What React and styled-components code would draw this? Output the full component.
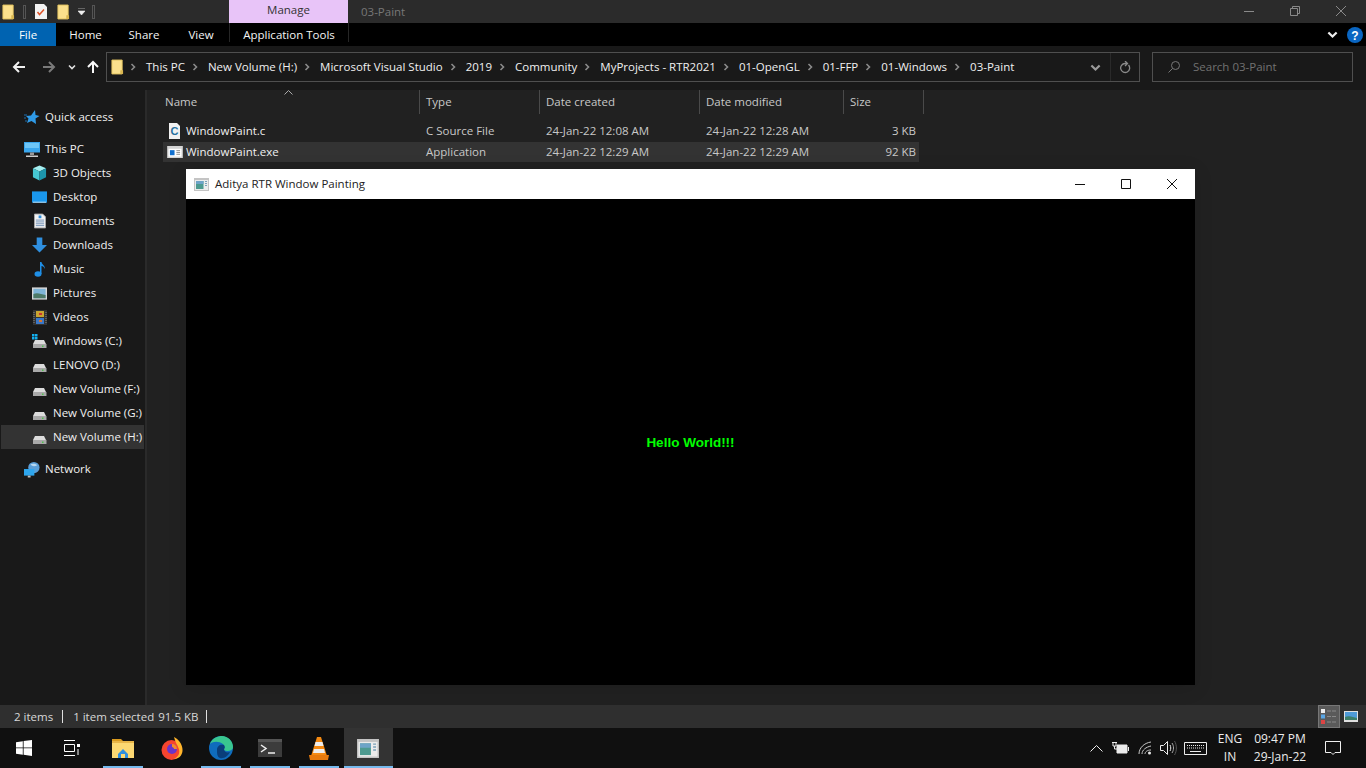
import React from 'react';
import styled, { createGlobalStyle } from 'styled-components';

const GlobalStyle = createGlobalStyle`
  html, body {
    margin: 0;
    padding: 0;
    background: #191919;
    overflow: hidden;
  }
  body {
    font-family: "Open Sans", "Noto Sans", sans-serif;
    font-size: 11.5px;
  }
  * { box-sizing: border-box; }
`;

const Page = styled.div`
  width: 1366px;
  height: 768px;
  display: flex;
  flex-direction: column;
  color: #f0f0f0;
  overflow: hidden;
`;

/* title bar */
const TitleBar = styled.div`
  height: 23px;
  background: #2b2b2b;
  display: flex;
  align-items: stretch;
`;

const QuickTools = styled.div`
  width: 229px;
  display: flex;
  align-items: center;
  padding-left: 2px;
`;

const ToolIcon = styled.span`
  display: flex;
  margin-right: ${p => p.$gap}px;
`;

const ToolSep = styled.span`
  width: 3px;
  height: 14px;
  border: 1px solid #555;
  margin-right: ${p => p.$gap}px;
`;

const ManageTab = styled.div`
  width: 119px;
  background: #e8c4f8;
  color: #333;
  display: flex;
  align-items: center;
  justify-content: center;
  padding-bottom: 5px;
`;

const WindowName = styled.div`
  flex: 1;
  padding-left: 13px;
  display: flex;
  align-items: center;
  color: #777;
`;

const WindowControls = styled.div`
  display: flex;
  align-items: center;
  padding-right: 2px;
`;

const ControlSlot = styled.span`
  width: 46px;
  display: flex;
  justify-content: center;
  padding-bottom: 2px;
`;

/* ribbon tabs */
const Ribbon = styled.div`
  height: 23px;
  background: #000;
  display: flex;
  align-items: stretch;
`;

const FileTab = styled.div`
  width: 56px;
  background: #0063b1;
  color: #fff;
  display: flex;
  align-items: center;
  justify-content: center;
`;

const RibbonTab = styled.div`
  width: ${p => p.$w}px;
  display: flex;
  align-items: center;
  justify-content: center;
  color: #f4f4f4;
`;

const ContextTab = styled(RibbonTab)`
  border-left: 1px solid #262626;
  border-right: 1px solid #262626;
  margin-bottom: 4px;
  padding-top: 4px;
`;

const RibbonEnd = styled.div`
  margin-left: auto;
  display: flex;
  align-items: center;
  gap: 9px;
  padding-right: 3px;
`;

/* address row */
const AddressRow = styled.div`
  height: 44px;
  background: #191919;
  display: flex;
  align-items: center;
  padding-bottom: 2px;
`;

const NavButtons = styled.div`
  width: 106px;
  display: flex;
  align-items: center;
`;

const NavSlot = styled.span`
  width: ${p => p.$w}px;
  display: flex;
  justify-content: center;
`;

const AddressBox = styled.div`
  width: 1034px;
  height: 30px;
  border: 1px solid #4f4f4f;
  display: flex;
  align-items: center;
  padding-left: 4px;
`;

const Crumbs = styled.div`
  flex: 1;
  display: flex;
  align-items: center;
  padding-left: 5px;
  white-space: nowrap;
`;

const Crumb = styled.span`
  color: #f0f0f0;
  margin-right: 6px;
  padding-bottom: 2px;
`;

const CrumbChevron = styled.span`
  display: flex;
  margin-right: 9px;
`;

const AddressDrop = styled.span`
  width: 29px;
  height: 100%;
  display: flex;
  align-items: center;
  justify-content: flex-start;
  padding-left: 9px;
`;

const Refresh = styled.span`
  width: 29px;
  height: 100%;
  border-left: 1px solid #2a2a2a;
  display: flex;
  align-items: center;
  justify-content: center;
`;

const SearchBox = styled.div`
  width: 201px;
  height: 30px;
  margin-left: 12px;
  border: 1px solid #4f4f4f;
  display: flex;
  align-items: center;
  padding-left: 15px;
  gap: 13px;
  color: #717171;
`;

const SearchText = styled.span`
  padding-bottom: 2px;
`;

/* main */
const Main = styled.div`
  position: relative;
  height: 615px;
  display: flex;
  background: #212121;
`;

const Sidebar = styled.div`
  width: 147px;
  padding-top: 15px;
  background: #191919;
  border-right: 2px solid #2a2a2a;
  display: flex;
  flex-direction: column;
`;

const NavItem = styled.div`
  height: 24px;
  margin: ${p => (p.$top ? '8px' : '0')} 1px 0 1px;
  padding-left: ${p => (p.$child ? 31 : 23)}px;
  display: flex;
  align-items: center;
  gap: ${p => (p.$child ? 6 : 5)}px;
  background: ${p => (p.$selected ? '#333' : 'transparent')};
  white-space: nowrap;
`;

const NavLabel = styled.span`
  padding-bottom: 2px;
`;

const NavIconBox = styled.span`
  width: ${p => (p.$child ? 15 : 16)}px;
  height: 16px;
  display: flex;
  align-items: center;
  justify-content: center;
`;

const Files = styled.div`
  flex: 1;
  padding-left: 13px;
  display: flex;
  flex-direction: column;
`;

const HeaderRow = styled.div`
  height: 24px;
  display: grid;
  grid-template-columns: 260px 120px 160px 144px 80px;
  margin-bottom: 7px;
`;

const HeaderCell = styled.div`
  position: relative;
  padding-left: ${p => p.$pad}px;
  padding-bottom: 2px;
  border-right: 1px solid #4a4a4a;
  display: flex;
  align-items: center;
  color: #c8c8c8;
`;

const SortCaret = styled.span`
  position: absolute;
  left: 124px;
  top: 0;
  display: flex;
`;

const FileRow = styled.div`
  height: 20px;
  width: 756px;
  margin-left: 3px;
  margin-bottom: 1px;
  padding-bottom: 1px;
  display: grid;
  grid-template-columns: 257px 120px 160px 144px 72px;
  align-items: center;
  background: ${p => (p.$selected ? '#333' : 'transparent')};
`;

const NameCell = styled.div`
  display: flex;
  align-items: center;
  gap: 3px;
  padding-left: 3px;
  color: #f0f0f0;
`;

const FileIconBox = styled.span`
  width: 17px;
  display: flex;
  justify-content: center;
`;

const InfoCell = styled.div`
  padding-left: 6px;
  color: #c8c8c8;
  text-align: ${p => (p.$right ? 'right' : 'left')};
`;

/* floating app window */
const AppWindow = styled.div`
  position: absolute;
  left: 186px;
  top: 79px;
  width: 1009px;
  height: 516px;
  display: flex;
  flex-direction: column;
  box-shadow: 0 3px 18px rgba(0, 0, 0, 0.12);
`;

const AppTitle = styled.div`
  height: 30px;
  background: #fff;
  color: #222;
  display: flex;
  align-items: center;
  padding-left: 8px;
  gap: 6px;
  font-size: 11.5px;
`;

const AppTitleText = styled.span`
  padding-bottom: 2px;
`;

const AppControls = styled.div`
  margin-left: auto;
  display: flex;
`;

const AppControl = styled.span`
  width: 46px;
  display: flex;
  justify-content: center;
`;

const AppCanvas = styled.div`
  flex: 1;
  background: #000;
  display: flex;
  align-items: center;
  justify-content: center;
`;

const Hello = styled.span`
  font-family: "Liberation Sans", Arial, sans-serif;
  font-weight: 700;
  font-size: 13.5px;
  color: #00ff00;
`;

/* status bar */
const StatusBar = styled.div`
  height: 23px;
  background: #2f2f2f;
  display: flex;
  align-items: center;
  padding-left: 14px;
  color: #d8d8d8;
`;

const StatusSep = styled.span`
  width: 1px;
  height: 13px;
  background: #e0e0e0;
  margin: 0 ${p => p.$right}px 0 ${p => p.$left}px;
`;

const StatusGap = styled.span`
  width: 4px;
`;

const StatusViews = styled.div`
  margin-left: auto;
  height: 100%;
  display: flex;
  align-items: center;
  padding-right: 4px;
`;

const ViewButton = styled.span`
  width: 22px;
  height: 23px;
  display: flex;
  align-items: center;
  justify-content: center;
  background: ${p => (p.$on ? '#5a5a5a' : 'transparent')};
  border: ${p => (p.$on ? '1px solid #777' : 'none')};
`;

/* taskbar */
const Taskbar = styled.div`
  height: 40px;
  background: #101010;
  display: flex;
  align-items: stretch;
`;

const TaskLeft = styled.div`
  width: 99px;
  display: flex;
`;

const TaskSlot = styled.span`
  width: ${p => p.$w}px;
  display: flex;
  align-items: center;
  justify-content: center;
`;

const TaskApp = styled.span`
  position: relative;
  width: 49px;
  padding-right: 1px;
  display: flex;
  align-items: center;
  justify-content: center;
  background: ${p => (p.$active ? '#333' : 'transparent')};
  &::after {
    content: '';
    display: ${p => (p.$running ? 'block' : 'none')};
    position: absolute;
    bottom: 0;
    left: ${p => (p.$active ? 0 : 4)}px;
    right: ${p => (p.$active ? 0 : 5)}px;
    height: 2px;
    background: #76b9ed;
  }
`;

const Tray = styled.div`
  margin-left: auto;
  display: flex;
  align-items: stretch;
`;

const TrayText = styled.div`
  width: ${p => p.$w}px;
  display: flex;
  flex-direction: column;
  align-items: center;
  justify-content: center;
  line-height: 18px;
  font-size: 12px;
  color: #ececec;
`;

/* icons */
const Folder = () => (
  <svg width="13" height="16" viewBox="0 0 14 17">
    <path d="M1 1h11v15H1z" fill="#fbe08c" stroke="#e8c861" strokeWidth="1" />
    <path d="M10 12h3v4h-3z" fill="#d8b650" />
  </svg>
);

const Chevron = ({ dir = 'right', color = '#8a8a8a', size = 8 }) => (
  <svg width={size} height={size} viewBox="0 0 8 8">
    <path
      d={dir === 'right' ? 'M2.5 1l3 3-3 3' : 'M1 2.5l3 3 3-3'}
      fill="none"
      stroke={color}
      strokeWidth="1.6"
    />
  </svg>
);

const Arrow = ({ dir, color }) => {
  const rot = { left: 0, right: 180, up: 90 }[dir];
  return (
    <svg width="14" height="14" viewBox="0 0 14 14" style={{ transform: `rotate(${rot}deg)` }}>
      <path d="M13 7H2M7 2L2 7l5 5" fill="none" stroke={color} strokeWidth="2" />
    </svg>
  );
};

const Star = () => (
  <svg width="16" height="16" viewBox="0 0 16 16">
    <path d="M11 1l.5 5 4 1-4 2.500L12 15l-4.500-3-4.500 2 1.500-4.500L2 7l5-.5z" fill="#2f9be8" />
    <path d="M0 6h3M0 9h2M1 12h2" stroke="#1c6fb0" strokeWidth="1" />
  </svg>
);

const Monitor = () => (
  <svg width="16" height="16" viewBox="0 0 16 16">
    <path d="M0 1h16v10.500H0z" fill="#3aa7ee" />
    <path d="M1 2h14v5H1z" fill="#6ec6f7" />
    <path d="M6 11.500h4V14H6z" fill="#999" />
    <path d="M2 14.500h12v1.500H2z" fill="#ccc" />
  </svg>
);

const Cube = () => (
  <svg width="16" height="16" viewBox="0 0 16 16">
    <path d="M8 0l7 3-7 3.500L1 3z" fill="#a5eef0" />
    <path d="M1 3l7 3.500V16l-7-3.500z" fill="#46c7d2" />
    <path d="M15 3L8 6.500V16l7-3.500z" fill="#1d96ad" />
  </svg>
);

const DesktopIcon = () => (
  <svg width="16" height="13" viewBox="0 0 16 13">
    <path d="M0 0h16v12H0z" fill="#1a97ec" />
    <path d="M1 11h14v1H1z" fill="#cde8fb" strokeDasharray="2 1" />
  </svg>
);

const DocIcon = () => (
  <svg width="12" height="16" viewBox="0 0 13 16">
    <path d="M.5.500h9l3 3v12H.500z" fill="#f2f2f2" stroke="#a8a8a8" />
    <path d="M2 7h9M2 9h9M2 11h9M2 13h9" stroke="#6f8fb5" strokeWidth="1" />
    <path d="M5 2h3v3H5z" fill="#2d8ddb" />
  </svg>
);

const DownIcon = () => (
  <svg width="16" height="16" viewBox="0 0 16 16">
    <path d="M5 0h6v8h5l-8 8-8-8h5z" fill="#2f8fdf" />
  </svg>
);

const MusicIcon = () => (
  <svg width="12" height="16" viewBox="0 0 12 16">
    <ellipse cx="4" cy="13" rx="3.500" ry="2.700" fill="#1f8fe6" />
    <path d="M6 1h1.500c.5 3 3.500 3 3.500 7-1-2-2-3-3.500-3v8H6z" fill="#1f8fe6" />
  </svg>
);

const PictureIcon = () => (
  <svg width="16" height="13" viewBox="0 0 16 13">
    <path d="M0 0h16v13H0z" fill="#d8d8d8" />
    <path d="M1.500 1.500h13v10h-13z" fill="#7fb5d8" />
    <path d="M1.500 7c4-2 8 0 13 1v3.500h-13z" fill="#4d7a68" />
  </svg>
);

const VideoIcon = () => (
  <svg width="14" height="15" viewBox="0 0 14 15">
    <path d="M0 0h14v15H0z" fill="#333" />
    <path d="M3 1h8v6H3z" fill="#c9a431" />
    <path d="M3 8h8v6H3z" fill="#3a77c8" />
    <path d="M6 3h3v2H6z" fill="#c33" />
    <path d="M6 10h3v2H6z" fill="#d8772d" />
    <path d="M1 2v11M13 2v11" stroke="#888" strokeDasharray="1 1" />
  </svg>
);

const Drive = ({ win }) => (
  <svg width="15" height="16" viewBox="0 0 15 16">
    {win && <path d="M0 1h2.500v2.500H0zM3 1h2.500v2.500H3zM0 4h2.500v2.500H0zM3 4h2.500v2.500H3z" fill="#14b0f0" />}
    <path d="M3 7h9l2 4H1z" fill="#dcdcdc" />
    <path d="M1 11h13.500v4H1z" fill="#a9a9a9" />
    <path d="M10 12.500h1.500V14H10z" fill="#4ec24e" />
  </svg>
);

const NetworkIcon = () => (
  <svg width="17" height="17" viewBox="0 0 17 17">
    <circle cx="10.500" cy="6.500" r="6" fill="#5b9fd8" />
    <path d="M7 3c2-1 5-1 7 1-2 1-5 2-7-1z" fill="#b8d8f0" />
    <path d="M0 8h11v7H0z" fill="#2ea6ee" />
    <path d="M4 15h3v2H4z" fill="#bbb" />
  </svg>
);

const SourceIcon = () => (
  <svg width="11" height="16" viewBox="0 0 11 16">
    <path d="M0 0h8l3 3v13H0z" fill="#f1f1f1" />
    <text x="1.500" y="12" fontSize="11" fontWeight="700" fill="#27709f" fontFamily="Liberation Sans">C</text>
  </svg>
);

const ExeIcon = () => (
  <svg width="16" height="12" viewBox="0 0 17 13">
    <path d="M0 0h17v13H0z" fill="#d4d4d4" />
    <path d="M1.500 3h14v8.500h-14z" fill="#fff" />
    <path d="M3 4.500h5V10H3z" fill="#1170cf" />
    <path d="M10 5h4M10 7h4M10 9h4" stroke="#8a8a8a" />
  </svg>
);

const AppIcon = ({ w = 15, h = 13 }) => (
  <svg width={w} height={h} viewBox="0 0 15 13">
    <path d="M0 0h15v13H0z" fill="#c4c4c4" />
    <path d="M1 2h13v10H1z" fill="#ececec" />
    <path d="M2 3h7.500v8H2z" fill="#4d9a90" />
    <path d="M2 3h7.500v3H2z" fill="#6ea4c8" />
    <path d="M11 3.500h2M11 5.500h2M11 7.500h2" stroke="#7aa0b8" />
  </svg>
);

const MinIcon = ({ color }) => (
  <svg width="12" height="12" viewBox="0 0 12 12"><path d="M1 6.500h10" stroke={color} strokeWidth="1" /></svg>
);

const MaxIcon = ({ color }) => (
  <svg width="12" height="12" viewBox="0 0 12 12"><path d="M1.500 1.500h9v9h-9z" fill="none" stroke={color} /></svg>
);

const RestoreIcon = ({ color }) => (
  <svg width="12" height="12" viewBox="0 0 12 12">
    <path d="M1.500 3.500h7v7h-7zM3.500 3.500v-2h7v7h-2" fill="none" stroke={color} />
  </svg>
);

const CloseIcon = ({ color, size = 12 }) => (
  <svg width={size} height={size} viewBox="0 0 12 12"><path d="M1 1l10 10M11 1L1 11" stroke={color} strokeWidth="1" /></svg>
);

const navItems = [
  { label: 'Quick access', icon: <Star />, top: false },
  { label: 'This PC', icon: <Monitor />, top: true },
  { label: '3D Objects', icon: <Cube />, child: true },
  { label: 'Desktop', icon: <DesktopIcon />, child: true },
  { label: 'Documents', icon: <DocIcon />, child: true },
  { label: 'Downloads', icon: <DownIcon />, child: true },
  { label: 'Music', icon: <MusicIcon />, child: true },
  { label: 'Pictures', icon: <PictureIcon />, child: true },
  { label: 'Videos', icon: <VideoIcon />, child: true },
  { label: 'Windows (C:)', icon: <Drive win />, child: true },
  { label: 'LENOVO (D:)', icon: <Drive />, child: true },
  { label: 'New Volume (F:)', icon: <Drive />, child: true },
  { label: 'New Volume (G:)', icon: <Drive />, child: true },
  { label: 'New Volume (H:)', icon: <Drive />, child: true, selected: true },
  { label: 'Network', icon: <NetworkIcon />, top: true },
];

const crumbs = ['This PC', 'New Volume (H:)', 'Microsoft Visual Studio', '2019', 'Community', 'MyProjects - RTR2021', '01-OpenGL', '01-FFP', '01-Windows', '03-Paint'];

const columns = [
  { label: 'Name', pad: 5 },
  { label: 'Type', pad: 6 },
  { label: 'Date created', pad: 6 },
  { label: 'Date modified', pad: 6 },
  { label: 'Size', pad: 6 },
];

const files = [
  { name: 'WindowPaint.c', type: 'C Source File', created: '24-Jan-22 12:08 AM', modified: '24-Jan-22 12:28 AM', size: '3 KB', icon: <SourceIcon /> },
  { name: 'WindowPaint.exe', type: 'Application', created: '24-Jan-22 12:29 AM', modified: '24-Jan-22 12:29 AM', size: '92 KB', icon: <ExeIcon />, selected: true },
];

const StartIcon = () => (
  <svg width="16" height="16" viewBox="0 0 16 16">
    <path d="M0 2.200l6.800-1v6.300H0zM7.600 1.100L16 0v7.500H7.600zM0 8.300h6.800v6.500L0 13.800zM7.600 8.300H16V16l-8.400-1.200z" fill="#fff" />
  </svg>
);

const TaskViewIcon = () => (
  <svg width="17" height="16" viewBox="0 0 17 16">
    <path d="M1 .5h11M1 15.500h11M1.500 4.500h10v7h-10z" fill="none" stroke="#fff" />
    <path d="M14 4h3v3h-3z" fill="#fff" />
    <path d="M15 9v6" stroke="#fff" />
  </svg>
);

const ExplorerIcon = () => (
  <svg width="22" height="19" viewBox="0 0 22 19">
    <path d="M0 0h9l2 2H0z" fill="#d99a1e" />
    <path d="M0 2h22v17H0z" fill="#fcd872" />
    <path d="M0 2h22v2H0z" fill="#e8b548" />
    <path d="M6 15l5-5 5 5v4H6z" fill="#2f8fdf" />
    <path d="M9 15h4v4H9z" fill="#fcd872" />
  </svg>
);

const FirefoxIcon = () => (
  <svg width="24" height="24" viewBox="0 0 24 24">
    <circle cx="11.500" cy="14" r="10" fill="#f6452f" />
    <path d="M14 1c6 3 9 9 8.500 14-.5 5-4 8-9 8 5-2 7-6 5-11-1-3-3-5-4.500-11z" fill="#ffb52c" />
    <circle cx="12" cy="13" r="5" fill="#6a34c9" />
    <path d="M12 8c3 0 5 2 5 5h-3c0-1-1-2-2-2z" fill="#f58a2a" />
  </svg>
);

const EdgeIcon = () => (
  <svg width="24" height="24" viewBox="0 0 24 24">
    <circle cx="12" cy="12" r="12" fill="#0f6cbd" />
    <path d="M1 8C3 2 9 0 13 0c6 0 11 5 11 11 0 3-3 4-6 4-2 0-3-1-3-2 1-1 1-3-1-5C10 5 4 5 1 8z" fill="#39c68f" />
    <path d="M8 14c0-4 3-6 7-5 1 2 1 3 0 4 0 3 3 4 6 3-2 4-6 7-10 6-3-1-3-5-3-8z" fill="#0a3e7a" />
  </svg>
);

const TerminalIcon = () => (
  <svg width="24" height="18" viewBox="0 0 24 18">
    <path d="M0 0h24v18H0z" fill="#3c3c3c" />
    <path d="M0 0h24v3H0z" fill="#555" />
    <path d="M3 6l5 3.500L3 13" fill="none" stroke="#f0f0f0" strokeWidth="1.500" />
    <path d="M10 14h7" stroke="#f0f0f0" strokeWidth="1.500" />
  </svg>
);

const VlcIcon = () => (
  <svg width="20" height="23" viewBox="0 0 20 23">
    <path d="M8 0h4l6 19H2z" fill="#f58a12" />
    <path d="M6.500 5h7l1 4h-9zM5 12h10l1 4H4z" fill="#eee" />
    <path d="M0 18h20l-1 5H1z" fill="#e87a0c" />
  </svg>
);

const BatteryIcon = () => (
  <svg width="17" height="14" viewBox="0 0 17 14">
    <path d="M5 4h10v8H5z" fill="#ececec" stroke="#ececec" />
    <path d="M0 1.500h5M1 1v4h3V1M2.500 5v3H5" fill="none" stroke="#ececec" />
    <path d="M16 6h1v4h-1z" fill="#ececec" />
  </svg>
);

const WifiIcon = () => (
  <svg width="15" height="14" viewBox="0 0 15 14">
    <path d="M1 13C1 7 6 2 13 1M4 13c0-4 4-7 9-8M7 13c0-2 2-4 6-4" fill="none" stroke="#c8c8c8" strokeWidth="1" />
    <circle cx="11.500" cy="12" r="1.500" fill="#ececec" />
  </svg>
);

const SpeakerIcon = () => (
  <svg width="17" height="16" viewBox="0 0 17 16">
    <path d="M.5 5.500h3l4-4v13l-4-4h-3z" fill="none" stroke="#ececec" />
    <path d="M10 5c1 2 1 4 0 6" fill="none" stroke="#ececec" />
    <path d="M12 3c2 3 2 7 0 10" fill="none" stroke="#aaa" />
    <path d="M14.500 1c2.500 4 2.500 10 0 14" fill="none" stroke="#555" />
  </svg>
);

const KeyboardIcon = () => (
  <svg width="23" height="13" viewBox="0 0 23 13">
    <path d="M.5.500h22v12H.500z" fill="none" stroke="#ececec" />
    <path d="M3 3.500h17M3 6h17" stroke="#ececec" strokeDasharray="1 1" />
    <path d="M6 9.500h11" stroke="#ececec" />
  </svg>
);

const NoteIcon = () => (
  <svg width="16" height="16" viewBox="0 0 16 16">
    <path d="M.5 1.500h15v11H10l-2 2-2-2H.500z" fill="none" stroke="#f0f0f0" />
  </svg>
);

const DetailsViewIcon = () => (
  <svg width="16" height="15" viewBox="0 0 16 15">
    <path d="M0 0h4v4H0z" fill="#eee" />
    <path d="M0 5.500h4v4H0z" fill="#5aa7e6" />
    <path d="M0 11h4v4H0z" fill="#d44" />
    <path d="M6 2h10M6 7.500h10M6 13h10" stroke="#8a8a8a" strokeDasharray="4 1" />
  </svg>
);

const LargeViewIcon = () => (
  <svg width="14" height="11" viewBox="0 0 14 11">
    <path d="M0 0h14v11H0z" fill="#e0e0e0" />
    <path d="M1 1h12v8H1z" fill="#4f9bd8" />
    <path d="M1 6c4-2 8 0 12 1v2H1z" fill="#3c7f6a" />
  </svg>
);

const App = () => (
  <Page>
    <GlobalStyle />
    <TitleBar>
      <QuickTools>
        <ToolIcon $gap={8}><Folder /></ToolIcon>
        <ToolSep $gap={9} />
        <ToolIcon $gap={10}>
          <svg width="12" height="15" viewBox="0 0 12 15">
            <path d="M0 0h9l3 3v12H0z" fill="#f3f3f3" />
            <path d="M2.500 8l2 2.500L9 5.500" fill="none" stroke="#e0552b" strokeWidth="1.500" />
          </svg>
        </ToolIcon>
        <ToolIcon $gap={8}><Folder /></ToolIcon>
        <ToolIcon $gap={7}>
          <svg width="7" height="8" viewBox="0 0 7 8"><path d="M0 0h7M0 3h7L3.500 7z" fill="#eee" stroke="#eee" strokeWidth=".6" /></svg>
        </ToolIcon>
        <ToolSep $gap={0} />
      </QuickTools>
      <ManageTab>Manage</ManageTab>
      <WindowName>03-Paint</WindowName>
      <WindowControls>
        <ControlSlot><MinIcon color="#8a8a8a" /></ControlSlot>
        <ControlSlot><RestoreIcon color="#8a8a8a" /></ControlSlot>
        <ControlSlot><CloseIcon color="#8a8a8a" /></ControlSlot>
      </WindowControls>
    </TitleBar>

    <Ribbon>
      <FileTab>File</FileTab>
      <RibbonTab $w={59}>Home</RibbonTab>
      <RibbonTab $w={58}>Share</RibbonTab>
      <RibbonTab $w={56}>View</RibbonTab>
      <ContextTab $w={120}>Application Tools</ContextTab>
      <RibbonEnd>
        <Chevron dir="down" color="#eee" size={11} />
        <svg width="16" height="16" viewBox="0 0 16 16">
          <circle cx="8" cy="8" r="8" fill="#0a66c2" />
          <text x="8" y="12.500" textAnchor="middle" fontSize="12" fontWeight="700" fill="#fff" fontFamily="Liberation Sans">?</text>
        </svg>
      </RibbonEnd>
    </Ribbon>

    <AddressRow>
      <NavButtons>
        <NavSlot $w={37}><Arrow dir="left" color="#f0f0f0" /></NavSlot>
        <NavSlot $w={23}><Arrow dir="right" color="#7a7a7a" /></NavSlot>
        <NavSlot $w={24}><Chevron dir="down" color="#e0e0e0" /></NavSlot>
        <NavSlot $w={18}><Arrow dir="up" color="#f8f8f8" /></NavSlot>
      </NavButtons>
      <AddressBox>
        <Folder />
        <Crumbs>
          {crumbs.map(c => (
            <React.Fragment key={c}>
              <CrumbChevron><Chevron /></CrumbChevron>
              <Crumb>{c}</Crumb>
            </React.Fragment>
          ))}
        </Crumbs>
        <AddressDrop><Chevron dir="down" color="#9a9a9a" size={11} /></AddressDrop>
        <Refresh>
          <svg width="12" height="13" viewBox="0 0 12 13">
            <path d="M9.500 4a4.500 4.500 0 1 1-3.500-1.500H8M6 0l2.500 2.500L6 5" fill="none" stroke="#8a8a8a" strokeWidth="1.300" />
          </svg>
        </Refresh>
      </AddressBox>
      <SearchBox>
        <svg width="12" height="12" viewBox="0 0 12 12">
          <circle cx="7.500" cy="4.500" r="4" fill="none" stroke="#777" />
          <path d="M4.500 7.500L.5 11.500" stroke="#777" />
        </svg>
        <SearchText>Search 03-Paint</SearchText>
      </SearchBox>
    </AddressRow>

    <Main>
      <Sidebar>
        {navItems.map(item => (
          <NavItem key={item.label} $child={item.child} $top={item.top} $selected={item.selected}>
            <NavIconBox $child={item.child}>{item.icon}</NavIconBox>
            <NavLabel>{item.label}</NavLabel>
          </NavItem>
        ))}
      </Sidebar>
      <Files>
        <HeaderRow>
          {columns.map(col => (
            <HeaderCell key={col.label} $pad={col.pad}>
              {col.label}
              {col.label === 'Name' && (
                <SortCaret>
                  <svg width="9" height="5" viewBox="0 0 9 5"><path d="M.5 4.500l4-4 4 4" fill="none" stroke="#aaa" /></svg>
                </SortCaret>
              )}
            </HeaderCell>
          ))}
        </HeaderRow>
        {files.map(f => (
          <FileRow key={f.name} $selected={f.selected}>
            <NameCell><FileIconBox>{f.icon}</FileIconBox><span>{f.name}</span></NameCell>
            <InfoCell>{f.type}</InfoCell>
            <InfoCell>{f.created}</InfoCell>
            <InfoCell>{f.modified}</InfoCell>
            <InfoCell $right>{f.size}</InfoCell>
          </FileRow>
        ))}
      </Files>

      <AppWindow>
        <AppTitle>
          <AppIcon />
          <AppTitleText>Aditya RTR Window Painting</AppTitleText>
          <AppControls>
            <AppControl><MinIcon color="#111" /></AppControl>
            <AppControl><MaxIcon color="#111" /></AppControl>
            <AppControl><CloseIcon color="#111" /></AppControl>
          </AppControls>
        </AppTitle>
        <AppCanvas>
          <Hello>Hello World!!!</Hello>
        </AppCanvas>
      </AppWindow>
    </Main>

    <StatusBar>
      2 items
      <StatusSep $left={9} $right={10} />
      1 item selected
      <StatusGap />
      91.5 KB
      <StatusSep $left={8} $right={0} />
      <StatusViews>
        <ViewButton $on><DetailsViewIcon /></ViewButton>
        <ViewButton><LargeViewIcon /></ViewButton>
      </StatusViews>
    </StatusBar>

    <Taskbar>
      <TaskLeft>
        <TaskSlot $w={48}><StartIcon /></TaskSlot>
        <TaskSlot $w={47}><TaskViewIcon /></TaskSlot>
      </TaskLeft>
      <TaskApp $running><ExplorerIcon /></TaskApp>
      <TaskApp><FirefoxIcon /></TaskApp>
      <TaskApp $running><EdgeIcon /></TaskApp>
      <TaskApp $running><TerminalIcon /></TaskApp>
      <TaskApp $running><VlcIcon /></TaskApp>
      <TaskApp $running $active><AppIcon w={24} h={19} /></TaskApp>
      <Tray>
        <TaskSlot $w={24}>
          <svg width="13" height="8" viewBox="0 0 13 8"><path d="M.5 7.500l6-6 6 6" fill="none" stroke="#ececec" /></svg>
        </TaskSlot>
        <TaskSlot $w={24}><BatteryIcon /></TaskSlot>
        <TaskSlot $w={26}><WifiIcon /></TaskSlot>
        <TaskSlot $w={21}><SpeakerIcon /></TaskSlot>
        <TaskSlot $w={32}><KeyboardIcon /></TaskSlot>
        <TrayText $w={38}><span>ENG</span><span>IN</span></TrayText>
        <TrayText $w={62}><span>09:47 PM</span><span>29-Jan-22</span></TrayText>
        <TaskSlot $w={44}><NoteIcon /></TaskSlot>
        <TaskSlot $w={11} />
      </Tray>
    </Taskbar>
  </Page>
);

export default App;
